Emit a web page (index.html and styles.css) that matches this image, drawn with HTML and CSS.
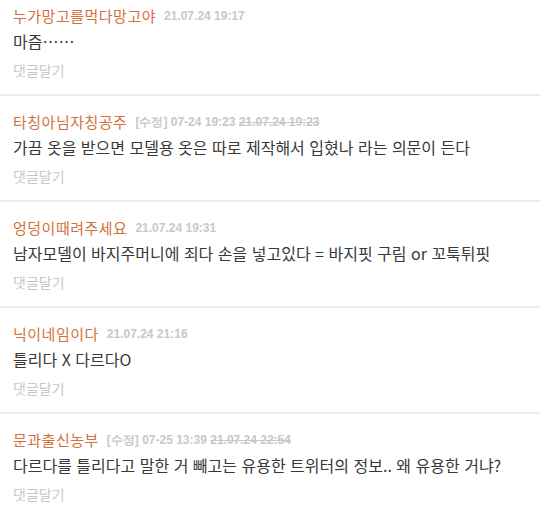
FILE: index.html
```html
<!DOCTYPE html>
<html lang="ko">
<head>
    <meta charset="UTF-8">
    <title>댓글</title>
    <link rel="stylesheet" href="styles.css">
</head>
<body>

    <ul class="comments">
        <li class="comment">
            <div class="meta">
                <span class="nick">누가망고를먹다망고야</span>
                <span class="date">21.07.24 19:17</span>
            </div>
            <p class="text">마즘……</p>
            <a class="reply" href="#">댓글달기</a>
        </li>
        <li class="comment">
            <div class="meta">
                <span class="nick">타칭아님자칭공주</span>
                <span class="date">[수정] 07-24 19:23 <s>21.07.24 19:23</s></span>
            </div>
            <p class="text">가끔 옷을 받으면 모델용 옷은 따로 제작해서 입혔나 라는 의문이 든다</p>
            <a class="reply" href="#">댓글달기</a>
        </li>
        <li class="comment">
            <div class="meta">
                <span class="nick">엉덩이때려주세요</span>
                <span class="date">21.07.24 19:31</span>
            </div>
            <p class="text">남자모델이 바지주머니에 죄다 손을 넣고있다 = 바지핏 구림 or 꼬툭튀핏</p>
            <a class="reply" href="#">댓글달기</a>
        </li>
        <li class="comment">
            <div class="meta">
                <span class="nick">닉이네임이다</span>
                <span class="date">21.07.24 21:16</span>
            </div>
            <p class="text">틀리다 X 다르다O</p>
            <a class="reply" href="#">댓글달기</a>
        </li>
        <li class="comment">
            <div class="meta">
                <span class="nick">문과출신농부</span>
                <span class="date">[수정] 07-25 13:39 <s>21.07.24 22:54</s></span>
            </div>
            <p class="text">다르다를 틀리다고 말한 거 빼고는 유용한 트위터의 정보.. 왜 유용한 거냐?</p>
            <a class="reply" href="#">댓글달기</a>
        </li>
    </ul>

</body>
</html>
```

FILE: styles.css
```css
body {
    margin: 0;
    background: #fff;
    font-family: "Noto Sans CJK KR", "Liberation Sans", sans-serif;
}

.comments {
    list-style: none;
    margin: 0;
    padding: 0;
}

.comment {
    padding: 16px 13px 14px;
    border-bottom: 2px solid #ebebeb;
}

.comment:first-child {
    padding-top: 6px;
}

.meta {
    display: flex;
    align-items: center;
    gap: 8px;
    height: 20px;
}

.nick {
    font-size: 15px;
    line-height: 20px;
    letter-spacing: 0.5px;
    color: #d2713d;
}

.date {
    font-family: "Liberation Sans", sans-serif;
    font-size: 12px;
    font-weight: bold;
    color: #c8c8c8;
}

.text {
    margin: 5px 0 9px;
    font-size: 16px;
    line-height: 20px;
    color: #383838;
}

.reply {
    display: block;
    font-size: 14px;
    line-height: 20px;
    color: #c8c8c8;
    text-decoration: none;
}
```
